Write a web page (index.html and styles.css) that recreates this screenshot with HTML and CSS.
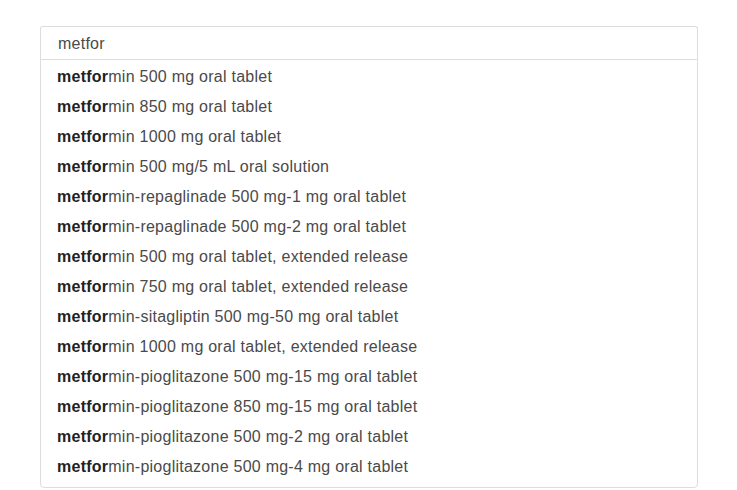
FILE: index.html
```html
<!DOCTYPE html>
<html>
<head>
<meta charset="utf-8">
<link rel="stylesheet" href="styles.css">
</head>
<body>
<div class="wrap">
  <div class="input">metfor</div>
  <ul class="menu">
    <li><b>metfor</b>min 500 mg oral tablet</li>
    <li><b>metfor</b>min 850 mg oral tablet</li>
    <li><b>metfor</b>min 1000 mg oral tablet</li>
    <li><b>metfor</b>min 500 mg/5 mL oral solution</li>
    <li><b>metfor</b>min-repaglinade 500 mg-1 mg oral tablet</li>
    <li><b>metfor</b>min-repaglinade 500 mg-2 mg oral tablet</li>
    <li><b>metfor</b>min 500 mg oral tablet, extended release</li>
    <li><b>metfor</b>min 750 mg oral tablet, extended release</li>
    <li><b>metfor</b>min-sitagliptin 500 mg-50 mg oral tablet</li>
    <li><b>metfor</b>min 1000 mg oral tablet, extended release</li>
    <li><b>metfor</b>min-pioglitazone 500 mg-15 mg oral tablet</li>
    <li><b>metfor</b>min-pioglitazone 850 mg-15 mg oral tablet</li>
    <li><b>metfor</b>min-pioglitazone 500 mg-2 mg oral tablet</li>
    <li><b>metfor</b>min-pioglitazone 500 mg-4 mg oral tablet</li>
  </ul>
</div>
</body>
</html>
```
FILE: styles.css
```css
html, body {
  margin: 0;
  padding: 0;
  background: #fff;
}
body {
  font-family: "Liberation Sans", Arial, sans-serif;
  font-size: 16px;
  letter-spacing: 0.25px;
  color: #4a4a4a;
}
.wrap {
  margin: 26px 39px 0 40px;
}
.input {
  height: 32px;
  line-height: 34px;
  border: 1px solid #ddd;
  border-bottom: none;
  border-radius: 3px 3px 0 0;
  padding: 0 17px;
}
.menu {
  list-style: none;
  margin: 0;
  padding: 2px 0 5px;
  border: 1px solid #ddd;
  border-radius: 0 0 4px 4px;
}
.menu li {
  height: 30px;
  line-height: 30px;
  padding: 0 16px;
}
.menu b {
  color: #222;
}
```
